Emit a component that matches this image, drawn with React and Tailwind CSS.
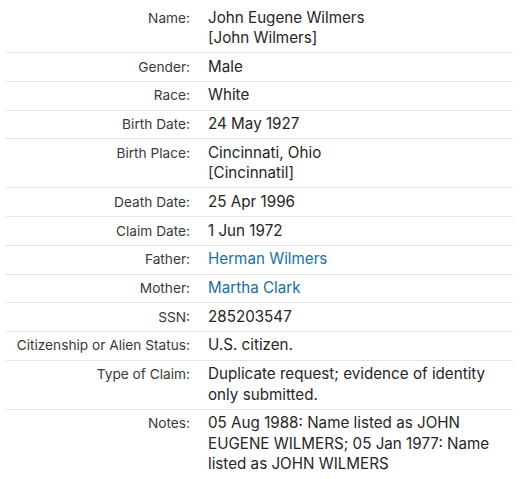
import React from "react";

const rows = [
  { label: "Name:", value: ["John Eugene Wilmers", "[John Wilmers]"] },
  { label: "Gender:", value: ["Male"] },
  { label: "Race:", value: ["White"] },
  { label: "Birth Date:", value: ["24 May 1927"] },
  { label: "Birth Place:", value: ["Cincinnati, Ohio", "[Cincinnatil]"] },
  { label: "Death Date:", value: ["25 Apr 1996"] },
  { label: "Claim Date:", value: ["1 Jun 1972"] },
  { label: "Father:", value: ["Herman Wilmers"], link: true },
  { label: "Mother:", value: ["Martha Clark"], link: true },
  { label: "SSN:", value: ["285203547"] },
  { label: "Citizenship or Alien Status:", value: ["U.S. citizen."] },
  { label: "Type of Claim:", value: ["Duplicate request; evidence of identity only submitted."] },
  { label: "Notes:", value: ["05 Aug 1988: Name listed as JOHN EUGENE WILMERS; 05 Jan 1977: Name listed as JOHN WILMERS"] },
];

export default function App() {
  return (
    <div className="w-[529px] h-[479px] bg-white pt-[4px] pl-[6px]" style={{ fontFamily: "Inter, 'Liberation Sans', sans-serif" }}>
      <div className="w-[507px]">
        {rows.map((r, i) => (
          <div
            key={i}
            className={`flex py-[3.6px] ${i < rows.length - 1 ? "border-b border-[#e4e4e4]" : ""}`}
          >
            <div className="w-[184px] shrink-0 text-right text-[13.7px] leading-[20.5px] text-[#3a3a3a]">
              {r.label}
            </div>
            <div className={`pl-[18px] pr-[8px] text-[15.2px] leading-[20.5px] ${r.link ? "text-[#1b70a3]" : "text-[#262626]"}`}>
              {r.value.map((v, j) => (
                <div key={j}>{v}</div>
              ))}
            </div>
          </div>
        ))}
      </div>
    </div>
  );
}
